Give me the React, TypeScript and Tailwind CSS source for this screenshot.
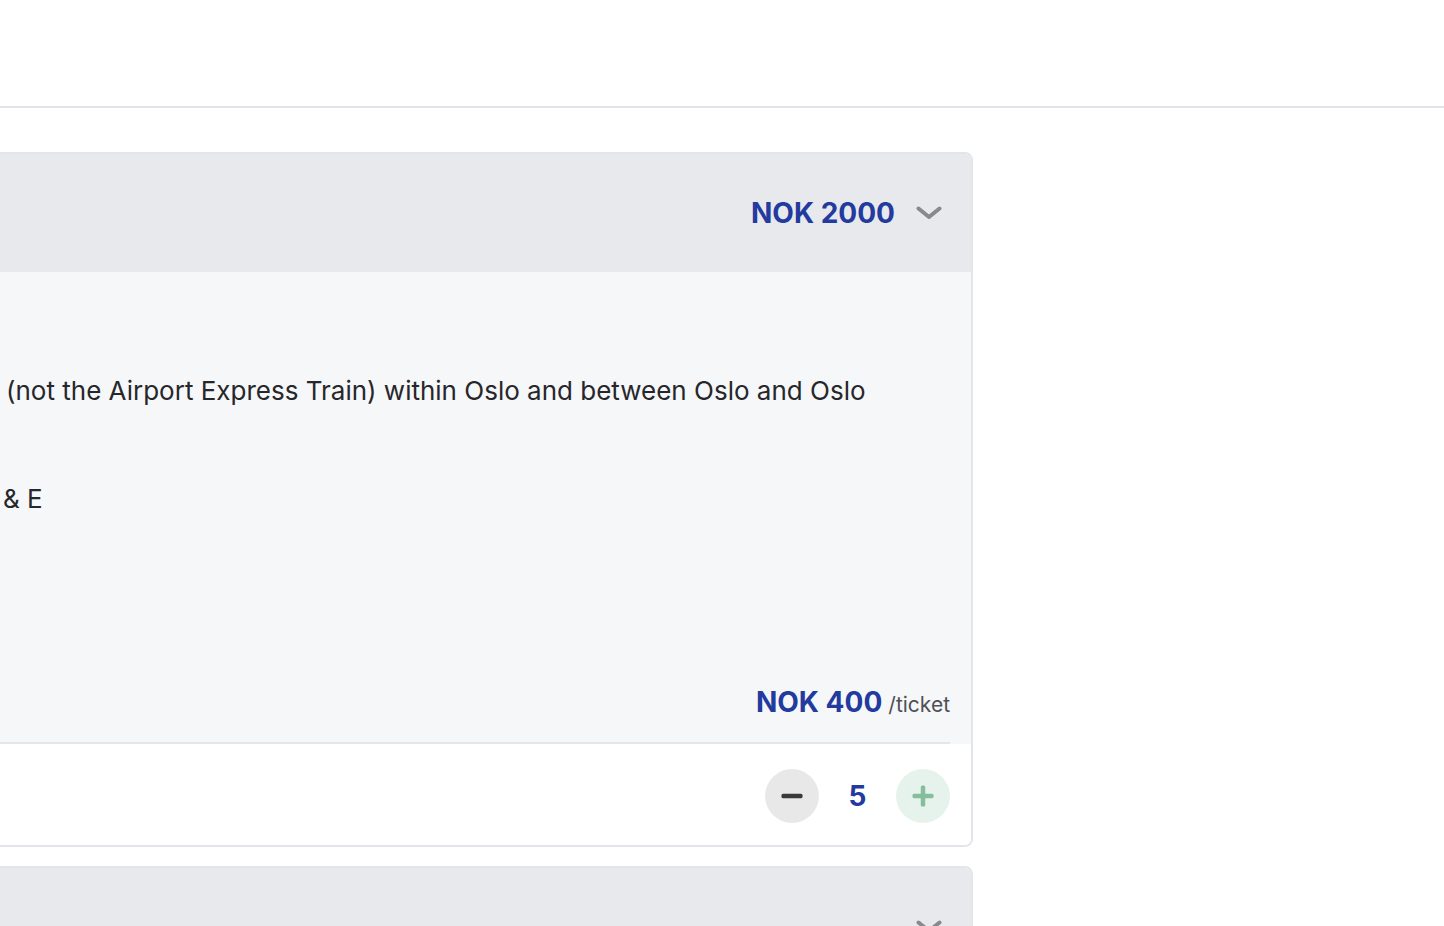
import { useState } from 'react';

const Chevron = () => (
  <svg width="26" height="14" viewBox="0 0 26 14" fill="none">
    <path d="M2.5 2.5 L13 11 L23.5 2.5" stroke="#8a8a8c" strokeWidth="4" strokeLinecap="round" strokeLinejoin="round" />
  </svg>
);

const TicketCard = ({ total, open, count, onMinus, onPlus }: { total?: string; open: boolean; count: number; onMinus: () => void; onPlus: () => void }) => (
  <div className="ml-[-40px] w-[1013px] shrink-0 rounded-lg border-2 border-[#e4e5ea] overflow-hidden bg-white">
    <div className="h-[118px] bg-[#e8e9ed] flex items-center justify-end pr-[29px] gap-[21px]">
      {total && <span className="text-[28px] font-bold text-[#233a9e] leading-none">{total}</span>}
      <Chevron />
    </div>
    {open && (
      <>
        <div className="bg-[#f6f7f9] pr-[21px]">
          <div className="border-b-2 border-[#e5e6ea] pl-[44px] pt-[101px] pb-[19px]">
            <p className="text-[26px] leading-[36px] text-[#27272b] whitespace-nowrap">
              (not the Airport Express Train) within Oslo and between Oslo and Oslo
            </p>
            <p className="mt-[72px] -ml-[3px] text-[26px] leading-[36px] text-[#27272b] whitespace-nowrap">
              &amp; E
            </p>
            <div className="mt-[167px] flex items-baseline justify-end leading-[36px]">
              <span className="text-[28px] font-bold text-[#233a9e]">NOK 400</span>
              <span className="ml-[6px] text-[21px] text-[#505055]">/ticket</span>
            </div>
          </div>
        </div>
        <div className="bg-white pt-[25px] pb-[22px] pr-[21px] flex justify-end items-center">
          <button onClick={onMinus} className="w-[54px] h-[54px] rounded-full bg-[#e8e8e8] flex items-center justify-center">
            <svg width="22" height="6" viewBox="0 0 22 6">
              <rect x="0.5" y="0.75" width="21" height="4.5" rx="1.5" fill="#3a3a3c" />
            </svg>
          </button>
          <span className="w-[77px] text-center text-[28px] font-bold text-[#233a9e] leading-none">{count}</span>
          <button onClick={onPlus} className="w-[54px] h-[54px] rounded-full bg-[#e6f3ec] flex items-center justify-center">
            <svg width="22" height="22" viewBox="0 0 22 22">
              <rect x="0.5" y="8.75" width="21" height="4.5" rx="1.5" fill="#86bd9c" />
              <rect x="8.75" y="0.5" width="4.5" height="21" rx="1.5" fill="#86bd9c" />
            </svg>
          </button>
        </div>
      </>
    )}
  </div>
);

export default function App() {
  const [count, setCount] = useState(5);

  return (
    <div className="w-[1444px] h-[926px] overflow-hidden bg-white font-['Inter',sans-serif]">
      <header className="h-[108px] border-b-2 border-[#e2e3e8] bg-white" />
      <main className="pt-[44px] flex flex-col gap-[19px]">
        <TicketCard
          total={`NOK ${count * 400}`}
          open
          count={count}
          onMinus={() => setCount(Math.max(0, count - 1))}
          onPlus={() => setCount(count + 1)}
        />
        <TicketCard open={false} count={0} onMinus={() => {}} onPlus={() => {}} />
      </main>
    </div>
  );
}
